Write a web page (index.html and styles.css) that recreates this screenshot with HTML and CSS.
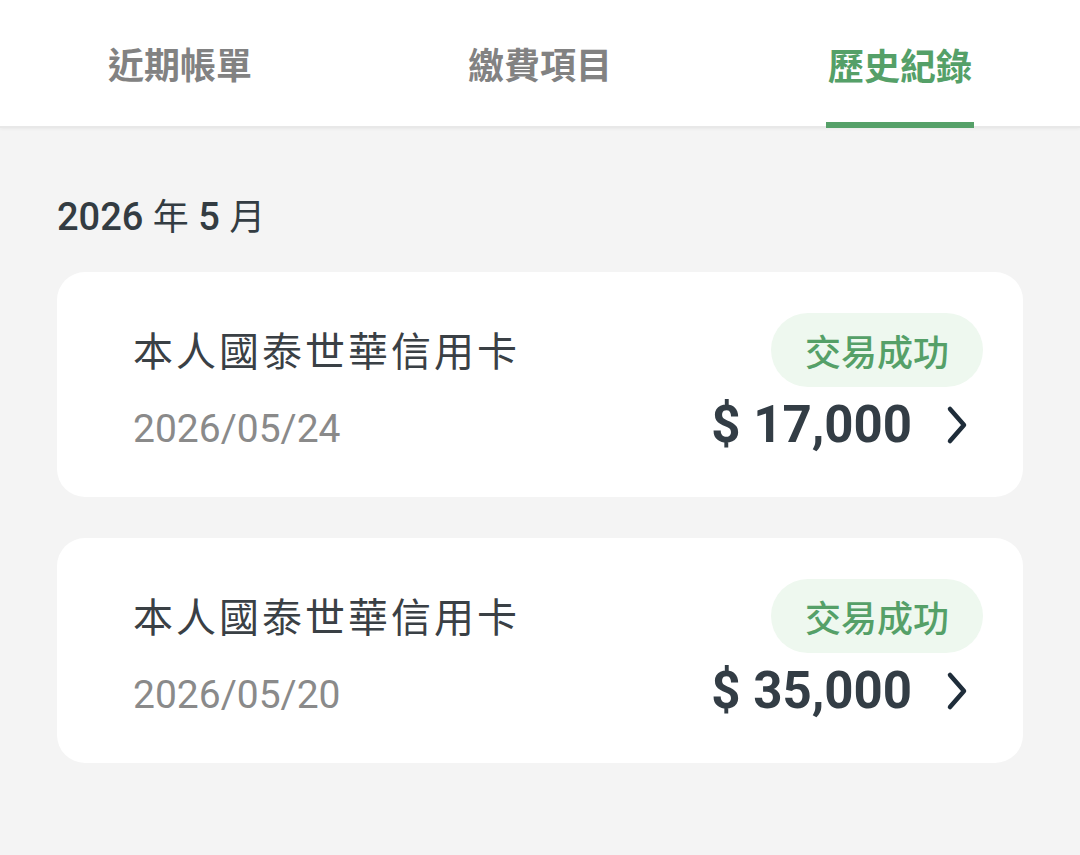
FILE: index.html
```html
<!DOCTYPE html>
<html lang="zh-Hant">

<head>
  <meta charset="UTF-8">
  <title>歷史紀錄</title>
  <link rel="stylesheet" href="styles.css">
</head>

<body>
  <nav class="tabs">
    <div class="tab">近期帳單</div>
    <div class="tab">繳費項目</div>
    <div class="tab active"><span>歷史紀錄</span></div>
  </nav>

  <main class="history">
    <h2 class="month">2026 <span class="unit">年</span> 5 <span class="unit">月</span></h2>

    <div class="record">
      <div class="record-info">
        <div class="record-name">本人國泰世華信用卡</div>
        <div class="record-date">2026/05/24</div>
      </div>
      <div class="record-side">
        <span class="badge">交易成功</span>
        <div class="amount-row">
          <span class="amount">$ 17,000</span>
          <svg class="chevron" width="22" height="40" viewBox="0 0 22 40">
            <path d="M4 4 L18 20 L4 36" fill="none" stroke="#1f2d3a" stroke-width="4.5" stroke-linecap="round" stroke-linejoin="round" />
          </svg>
        </div>
      </div>
    </div>

    <div class="record">
      <div class="record-info">
        <div class="record-name">本人國泰世華信用卡</div>
        <div class="record-date">2026/05/20</div>
      </div>
      <div class="record-side">
        <span class="badge">交易成功</span>
        <div class="amount-row">
          <span class="amount">$ 35,000</span>
          <svg class="chevron" width="22" height="40" viewBox="0 0 22 40">
            <path d="M4 4 L18 20 L4 36" fill="none" stroke="#1f2d3a" stroke-width="4.5" stroke-linecap="round" stroke-linejoin="round" />
          </svg>
        </div>
      </div>
    </div>
  </main>
</body>

</html>
```

FILE: styles.css
```css
body {
  margin: 0;
  background-color: #f4f4f4;
  font-family: Roboto, "Noto Sans CJK TC", sans-serif;
  color: #333c42;
}

.tabs {
  display: grid;
  grid-template-columns: 1fr 1fr 1fr;
  height: 126px;
  background-color: #ffffff;
  border-bottom: 2px solid #e8e8e8;
  box-shadow: 0 1px 3px rgba(0, 0, 0, 0.05);
}

.tab {
  display: flex;
  justify-content: center;
  align-items: center;
  font-size: 36px;
  font-weight: bold;
  color: #828282;
}

.tab.active {
  color: #55a068;
  align-items: stretch;
}

.tab.active span {
  display: flex;
  align-items: center;
  border-bottom: 6px solid #55a068;
  padding: 6px 2px 0;
  margin-bottom: -2px;
}

.history {
  padding: 67px 57px 0;
}

.month {
  margin: 0 0 32px;
  font-size: 38px;
  font-weight: 500;
  line-height: 44px;
  color: #333c42;
}

.month .unit {
  font-weight: normal;
  font-size: 36px;
}

.record {
  display: flex;
  justify-content: space-between;
  background-color: #ffffff;
  border-radius: 28px;
  height: 225px;
  box-sizing: border-box;
  padding: 41px 40px 0 76px;
  margin-bottom: 41px;
}

.record-info {
  padding-top: 12px;
}

.record-name {
  font-size: 40px;
  line-height: 56px;
  letter-spacing: 3px;
  color: #3a4045;
}

.record-date {
  margin-top: 26px;
  font-size: 39px;
  line-height: 44px;
  color: #8a8a8a;
}

.record-side {
  display: flex;
  flex-direction: column;
  align-items: flex-end;
}

.badge {
  display: flex;
  align-items: center;
  height: 74px;
  padding: 0 34px;
  border-radius: 37px;
  background-color: #eef8ef;
  color: #55a068;
  font-size: 36px;
  font-weight: 500;
}

.amount-row {
  display: flex;
  align-items: center;
  gap: 34px;
  margin-top: 8px;
  padding-right: 15px;
}

.amount {
  font-size: 51px;
  font-weight: bold;
  line-height: 60px;
  color: #333d45;
}
```
